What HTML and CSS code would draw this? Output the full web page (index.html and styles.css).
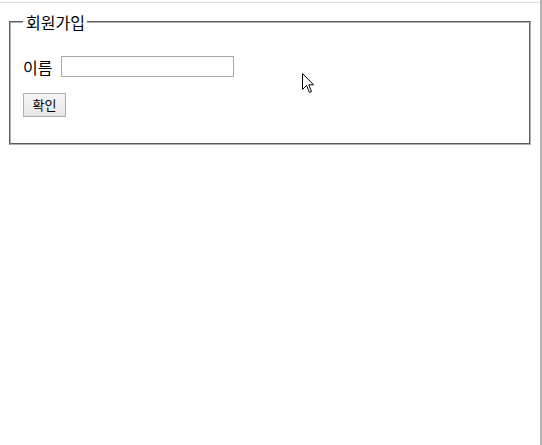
FILE: index.html
```html
<!DOCTYPE html>
<html lang="ko">
<head>
<meta charset="utf-8">
<title>회원가입</title>
<link rel="stylesheet" href="styles.css">
</head>
<body>
<div class="screen">
  <div class="page">
    <form class="join-form">
      <fieldset class="join-set">
        <legend class="join-legend">회원가입</legend>
        <div class="row">
          <label class="label" for="name">이름</label>
          <input class="text-input" id="name" type="text">
        </div>
        <div class="actions">
          <button class="btn" type="button">확인</button>
        </div>
      </fieldset>
    </form>
    <svg class="cursor" width="13" height="21" viewBox="0 0 13 21" aria-hidden="true">
      <path d="M0.5 0.5 L0.5 16.5 L4.5 12.5 L7.5 19.5 L9.5 18.5 L6.8 11.8 L11.5 11.8 Z" fill="#fff" stroke="#000" stroke-width="1" stroke-linejoin="miter"/>
    </svg>
  </div>
</div>
</body>
</html>
```
FILE: styles.css
```css
html, body {
  margin: 0;
  padding: 0;
  background: #fff;
}
body {
  font-family: "Noto Sans CJK KR", "Malgun Gothic", sans-serif;
  font-size: 16px;
  color: #000;
}
.screen {
  box-sizing: border-box;
  width: 542px;
  height: 445px;
  border-right: 2px solid #b4b4b4;
  overflow: hidden;
}
.page {
  position: relative;
  margin-top: 2px;
  border-top: 1px solid #dcdcdc;
  height: 440px;
}
.join-form {
  margin: 0;
  padding: 10px 0 0 9px;
}
.join-set {
  box-sizing: border-box;
  width: 522px;
  margin: 0;
  padding: 0 12px 26px 12px;
  border: 2px groove #b0b0b0;
  min-width: 0;
}
.join-legend {
  padding: 0 2px 0 3px;
  margin-left: 0;
  font-size: 16px;
  line-height: 18px;
}
.row {
  display: flex;
  align-items: center;
  gap: 9px;
  margin-top: 25px;
  height: 21px;
}
.label {
  font-size: 16px;
  line-height: 18px;
}
.text-input {
  box-sizing: border-box;
  width: 173px;
  height: 21px;
  margin: 0;
  padding: 0 2px;
  border: 1px solid #a9a9a9;
  background: #fff;
  font: inherit;
  font-size: 13px;
}
.actions {
  margin-top: 16px;
  display: flex;
}
.btn {
  box-sizing: border-box;
  height: 24px;
  width: 43px;
  margin: 0;
  padding: 0;
  border: 1px solid #adadad;
  border-radius: 0;
  background: linear-gradient(#f6f6f6, #e6e6e6);
  font-family: inherit;
  font-size: 13px;
  line-height: 20px;
  color: #000;
}
.cursor {
  position: absolute;
  left: 302px;
  top: 70px;
}
```
